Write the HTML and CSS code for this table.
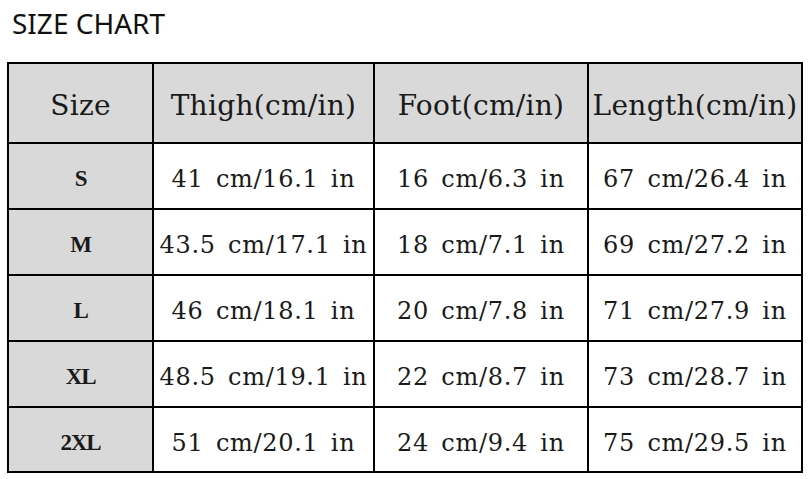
FILE: index.html
```html
<!DOCTYPE html>
<html lang="en">
<head>
<meta charset="utf-8">
<title>Size Chart</title>
<link rel="stylesheet" href="styles.css">
</head>
<body>
<h1 class="title">SIZE CHART</h1>
<div class="chart" role="table">
  <div class="cell head" role="columnheader">Size</div>
  <div class="cell head" role="columnheader">Thigh(cm/in)</div>
  <div class="cell head" role="columnheader">Foot(cm/in)</div>
  <div class="cell head" role="columnheader">Length(cm/in)</div>

  <div class="cell label" role="rowheader">S</div>
  <div class="cell val">41 cm/16.1 in</div>
  <div class="cell val">16 cm/6.3 in</div>
  <div class="cell val">67 cm/26.4 in</div>

  <div class="cell label" role="rowheader">M</div>
  <div class="cell val">43.5 cm/17.1 in</div>
  <div class="cell val">18 cm/7.1 in</div>
  <div class="cell val">69 cm/27.2 in</div>

  <div class="cell label" role="rowheader">L</div>
  <div class="cell val">46 cm/18.1 in</div>
  <div class="cell val">20 cm/7.8 in</div>
  <div class="cell val">71 cm/27.9 in</div>

  <div class="cell label" role="rowheader">XL</div>
  <div class="cell val">48.5 cm/19.1 in</div>
  <div class="cell val">22 cm/8.7 in</div>
  <div class="cell val">73 cm/28.7 in</div>

  <div class="cell label" role="rowheader">2XL</div>
  <div class="cell val">51 cm/20.1 in</div>
  <div class="cell val">24 cm/9.4 in</div>
  <div class="cell val">75 cm/29.5 in</div>
</div>
</body>
</html>
```
FILE: styles.css
```css
html, body {
  margin: 0;
  padding: 0;
  background: #ffffff;
}

.title {
  margin: 0;
  padding: 9px 0 0 12px;
  box-sizing: border-box;
  height: 62px;
  font-family: "Noto Sans", "Open Sans", sans-serif;
  font-weight: 400;
  font-size: 28px;
  line-height: 29px;
  color: #111;
}

.chart {
  margin-left: 7px;
  width: 796px;
  display: grid;
  grid-template-columns: 143px 219px 212px 212px;
  grid-template-rows: 78px 64px 64px 64px 64px 63px;
  gap: 2px;
  padding: 2px;
  box-sizing: border-box;
  background: #000;
}

.cell {
  display: flex;
  align-items: center;
  justify-content: center;
  background: #fff;
  color: #1a1a1a;
  font-family: "DejaVu Serif", serif;
  font-weight: 400;
  white-space: nowrap;
}

.head {
  background: #d9d9d9;
  font-size: 28px;
  letter-spacing: 0.3px;
  padding-top: 4px;
}

.label {
  background: #d9d9d9;
  font-family: "Liberation Serif", serif;
  font-size: 23px;
  font-weight: 700;
  letter-spacing: -1.2px;
  padding-top: 6px;
}

.val {
  font-size: 24px;
  letter-spacing: 0.7px;
  word-spacing: 4px;
  padding-top: 6px;
}
```
